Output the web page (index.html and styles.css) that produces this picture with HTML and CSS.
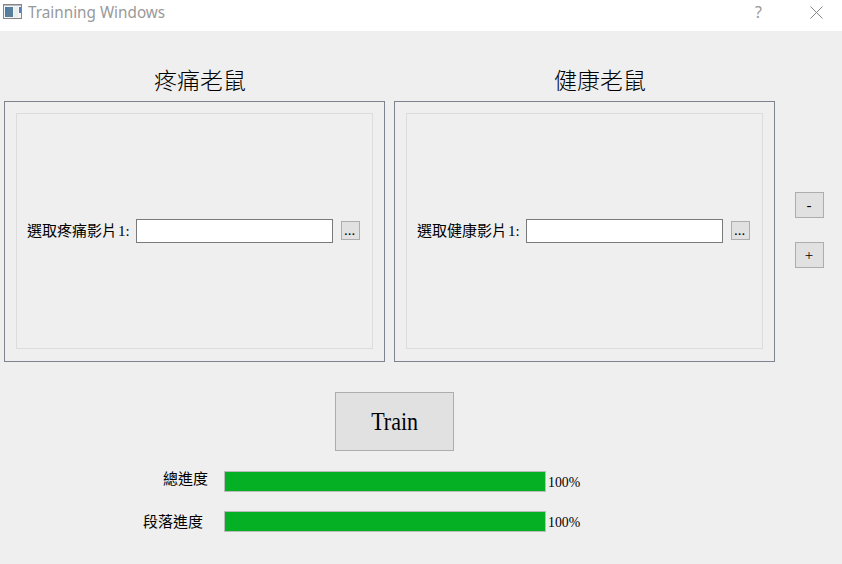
FILE: index.html
```html
<!DOCTYPE html>
<html lang="zh-Hant">
<head>
<meta charset="utf-8">
<title>Trainning Windows</title>
<link rel="stylesheet" href="styles.css">
</head>
<body>
<header class="titlebar">
  <svg class="app-icon" width="19" height="16" viewBox="0 0 19 16">
    <rect x=".5" y=".5" width="18" height="14" fill="#f4f4f4" stroke="#85858b"/>
    <rect x="1" y="1" width="17" height="1" fill="#b9bbc2"/>
    <rect x="2" y="3" width="8" height="10" fill="#58809c"/>
    <path d="M2 13V3h3z" fill="#477ba8"/>
    <rect x="11" y="3" width="4" height="10" fill="#e9eeee"/>
    <rect x="16" y="3" width="2" height="6" fill="#5681b5"/>
  </svg>
  <span class="title"><span class="fit">Trainning Windows</span></span>
  <span class="help"><span class="fit">?</span></span>
  <svg class="close" width="13" height="13" viewBox="0 0 13 13"><path d="M.5 .5l12 12M12.5 .5l-12 12" stroke="#858585" fill="none"/></svg>
</header>
<main>
  <div class="top">
    <section class="column">
      <h2>疼痛老鼠</h2>
      <div class="frame"><div class="row">
        <label>選取疼痛影片<span class="num">1:</span></label><input type="text"><button class="browse">...</button>
      </div></div>
    </section>
    <section class="column healthy">
      <h2>健康老鼠</h2>
      <div class="frame"><div class="row">
        <label>選取健康影片<span class="num">1:</span></label><input type="text"><button class="browse">...</button>
      </div></div>
    </section>
    <div class="counter">
      <button>-</button>
      <button>+</button>
    </div>
  </div>
  <button class="train"><span class="fit">Train</span></button>
  <div class="progress total"><span class="name">總進度</span><div class="bar"><div class="fill"></div></div><span class="pct"><span class="fit">100%</span></span></div>
  <div class="progress stage"><span class="name">段落進度</span><div class="bar"><div class="fill"></div></div><span class="pct"><span class="fit">100%</span></span></div>
</main>
</body>
</html>
```
FILE: styles.css
```css
* { box-sizing: border-box; }
body {
  margin: 0;
  width: 842px;
  height: 564px;
  overflow: hidden;
  background: #efefef;
  color: #000;
  font: 400 15px "Liberation Serif", "Noto Sans CJK TC", serif;
}
.titlebar {
  display: flex;
  height: 31px;
  padding: 4px 0 0 3px;
  background: #fff;
  color: #999;
  font-family: "Noto Sans", sans-serif;
  font-size: 16px;
  line-height: 16px;
}
.fit { display: inline-block; transform-origin: 0 50%; white-space: nowrap; }
.app-icon { flex: none; }
.title { width: 727px; margin-left: 6px; }
.title .fit { width: 144px; transform: scaleX(.955); }
.help { width: 54px; }
.close { margin: 2px 0 0 1px; }
.top { display: flex; height: 331px; padding-left: 4px; }
.column { width: 381px; margin-right: 9px; padding-top: 36px; }
h2 {
  height: 34px;
  margin: 0;
  padding-left: 11px;
  font-size: 23px;
  font-weight: 300;
  line-height: 30px;
  text-align: center;
}
.healthy h2 { padding-left: 31px; }
.frame { height: 261px; padding: 11px; border: 1px solid #7d8490; }
.row {
  display: flex;
  align-items: center;
  width: 357px;
  height: 236px;
  padding-left: 10px;
  border: 1px solid #dcdcdc;
}
label { flex: none; width: 109px; line-height: 24px; white-space: nowrap; }
.num { margin-left: 1px; }
input { width: 197px; height: 24px; padding: 0 3px; border: 1px solid #7a7a7a; background: #fff; outline: 0; }
button { padding: 0; border: 1px solid #adadad; background: #e1e1e1; color: #000; font: inherit; }
.browse { width: 19px; height: 19px; margin: 0 0 1px 8px; padding-right: 2px; line-height: 17px; }
.counter { display: flex; flex-direction: column; gap: 24px; padding: 161px 0 0 11px; }
.counter button { width: 29px; height: 26px; padding: 1px 1px 0 0; }
.train { display: block; width: 119px; height: 59px; margin: 30px 0 0 335px; font-size: 25px; }
.train .fit { transform: scaleX(.88); transform-origin: 50% 50%; }
.progress { display: flex; height: 21px; line-height: 22px; }
.total { margin-top: 20px; padding-left: 163px; }
.stage { margin-top: 19px; padding-left: 143px; }
.total .name { width: 61px; position: relative; top: -3px; }
.stage .name { width: 81px; }
.bar { width: 322px; border: 1px solid #bcbcbc; background: #e6e6e6; }
.fill { width: 100%; height: 100%; background: #06b025; }
.pct { margin-left: 2px; }
.pct .fit { transform: scaleX(.92); }
```
